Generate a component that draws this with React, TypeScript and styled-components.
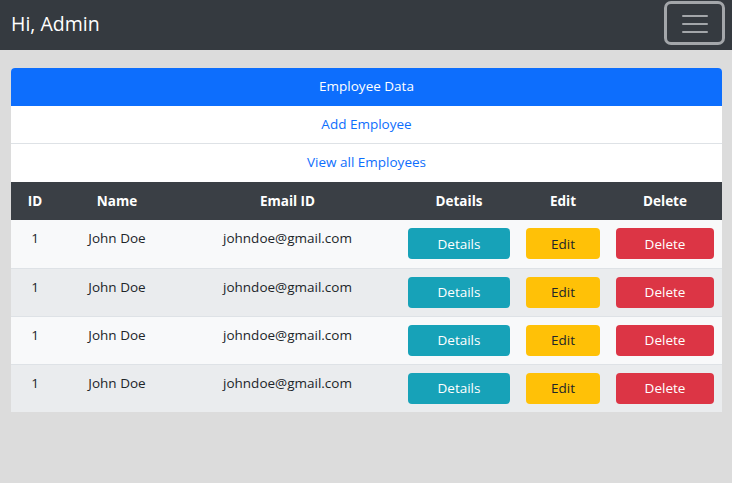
import React from "react";
import styled, { createGlobalStyle } from "styled-components";

const Global = createGlobalStyle`
  html, body { margin: 0; padding: 0; }
  body {
    background: #dcdcdc;
    font-family: "Open Sans", "Noto Sans", "Liberation Sans", sans-serif;
    font-size: 14px;
    color: #212529;
  }
  * { box-sizing: border-box; }
`;

const Navbar = styled.nav`
  height: 50px;
  background: #353a40;
  display: flex;
  align-items: center;
  justify-content: space-between;
  padding: 0 7px 0 11px;
`;

const Brand = styled.span`
  color: #fff;
  font-size: 19.5px;
  line-height: 1;
  margin-top: -3px;
`;

const Toggler = styled.button`
  width: 61px;
  height: 44px;
  margin-top: -4px;
  background: transparent;
  border: 3px solid #a3a6aa;
  border-radius: 7px;
  display: flex;
  align-items: center;
  justify-content: center;
  padding: 0;
`;

const Container = styled.div`
  margin: 18px 10px 0 11px;
`;

const ListGroup = styled.div`
  display: flex;
  flex-direction: column;
  background: #fff;
  border-radius: 4px 4px 0 0;
  overflow: hidden;
`;

const ListItem = styled.a<{ $active?: boolean }>`
  display: block;
  height: 38px;
  line-height: 37px;
  text-align: center;
  font-size: 13.5px;
  text-decoration: none;
  color: ${(p) => (p.$active ? "#fff" : "#0d6efd")};
  background: ${(p) => (p.$active ? "#0d6efd" : "#fff")};
  border-bottom: 1px solid ${(p) => (p.$active ? "#0d6efd" : "#dee2e6")};
  &:last-child { border-bottom: none; }
`;

const Table = styled.table`
  width: 100%;
  border-collapse: collapse;
  table-layout: fixed;
`;

const Th = styled.th`
  background: #3a3f45;
  color: #fff;
  font-weight: 700;
  font-size: 13.5px;
  height: 38px;
  padding: 0 8px;
  text-align: center;
`;

const Row = styled.tr<{ $odd: boolean }>`
  background: ${(p) => (p.$odd ? "#f8f9fa" : "#eaecee")};
  border-bottom: 1px solid #dee2e6;
  &:last-child { border-bottom: none; }
`;

const Td = styled.td`
  height: 48px;
  padding: 8px;
  text-align: center;
  vertical-align: top;
  font-size: 13.5px;
  line-height: 21px;
  color: #212529;
`;

const Btn = styled.button<{ $bg: string; $fg: string }>`
  display: block;
  width: 100%;
  height: 31px;
  border: none;
  border-radius: 4px;
  background: ${(p) => p.$bg};
  color: ${(p) => p.$fg};
  font-family: inherit;
  font-size: 13.5px;
  padding: 0;
`;

const cols = [48, 116, 225, 118, 90, 114];
const rows = [0, 1, 2, 3];

export default function App() {
  return (
    <>
      <Global />
      <Navbar>
        <Brand>Hi, Admin</Brand>
        <Toggler aria-label="menu">
          <svg width="26" height="20" viewBox="0 0 26 20">
            <g stroke="#a3a6aa" strokeWidth="2" strokeLinecap="round">
              <line x1="1" y1="3" x2="25" y2="3" />
              <line x1="1" y1="11" x2="25" y2="11" />
              <line x1="1" y1="19" x2="25" y2="19" />
            </g>
          </svg>
        </Toggler>
      </Navbar>
      <Container>
        <ListGroup>
          <ListItem $active href="#">Employee Data</ListItem>
          <ListItem href="#">Add Employee</ListItem>
          <ListItem href="#">View all Employees</ListItem>
        </ListGroup>
        <Table>
          <colgroup>
            {cols.map((w, i) => (
              <col key={i} style={{ width: w }} />
            ))}
          </colgroup>
          <thead>
            <tr>
              <Th>ID</Th>
              <Th>Name</Th>
              <Th>Email ID</Th>
              <Th>Details</Th>
              <Th>Edit</Th>
              <Th>Delete</Th>
            </tr>
          </thead>
          <tbody>
            {rows.map((r) => (
              <Row key={r} $odd={r % 2 === 0}>
                <Td>1</Td>
                <Td>John Doe</Td>
                <Td>johndoe@gmail.com</Td>
                <Td><Btn $bg="#17a2b8" $fg="#fff">Details</Btn></Td>
                <Td><Btn $bg="#ffc107" $fg="#212529">Edit</Btn></Td>
                <Td><Btn $bg="#dc3545" $fg="#fff">Delete</Btn></Td>
              </Row>
            ))}
          </tbody>
        </Table>
      </Container>
    </>
  );
}
